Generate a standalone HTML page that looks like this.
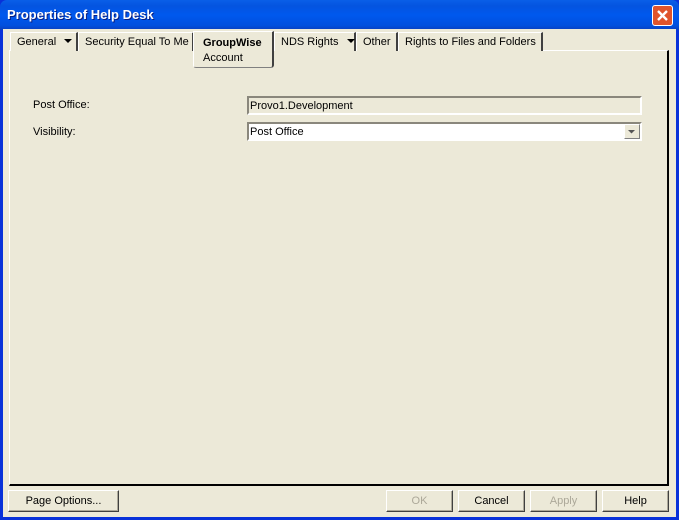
<!DOCTYPE html>
<html><head><style>
*{margin:0;padding:0;box-sizing:border-box}
body{width:679px;height:520px;overflow:hidden;background:#0831d9;font-family:"Liberation Sans",Tahoma,sans-serif;font-size:11px;color:#000;position:relative}
.abs{position:absolute}
#title{left:0;top:0;width:679px;height:30px;background:linear-gradient(#0a5fe8,#0454e0 20%,#0058ee 50%,#0150de 85%,#0a3fbd);border-radius:7px 7px 0 0}
#title span{position:absolute;left:7px;top:7px;color:#fff;font-weight:bold;font-size:13px;text-shadow:1px 1px #0a1e80}
#close{left:652px;top:5px;width:21px;height:21px;background:#e0542c;border:1px solid #fff;border-radius:3px}
#client{left:3px;top:29px;width:673px;height:488px;background:#ece9d8}
.tab{position:absolute;top:32px;height:19px;border:1px solid #fff;border-right:2px solid #404040;border-bottom:none;padding:3px 0 0 6px;background:#ece9d8;white-space:nowrap}
#panel{left:9px;top:50px;width:660px;height:436px;border-top:1px solid #fff;border-left:1px solid #fff;border-right:2px solid #000;border-bottom:2px solid #000}
.field{position:absolute;left:247px;width:395px;height:19px;border:2px solid;border-color:#8a877c #fff #fff #8a877c;padding:2px 0 0 1px}
.btn{position:absolute;top:490px;height:22px;border:1px solid;border-color:#fff #404040 #404040 #fff;box-shadow:inset -1px -1px #aca899;text-align:center;padding-top:4px;background:#ece9d8}
.dis{color:#aca899}
</style></head><body>
<div id="title" class="abs"><span>Properties of Help Desk</span></div>
<div id="close" class="abs"><svg width="19" height="19"><path d="M5 5L14 14M14 5L5 14" stroke="#fff" stroke-width="2.4"/></svg></div>
<div id="client" class="abs"></div>
<div id="panel" class="abs"></div>
<div class="tab" style="left:10px;width:68px">General <svg width="10" height="8" style="margin-left:4px"><path d="M1 2h8l-4 4z" fill="#000"/></svg></div>
<div class="tab" style="left:78px;width:116px">Security Equal To Me</div>
<div class="tab" style="left:274px;width:82px">NDS Rights <svg width="10" height="8" style="margin-left:4px"><path d="M1 2h8l-4 4z" fill="#000"/></svg></div>
<div class="tab" style="left:356px;width:42px">Other</div>
<div class="tab" style="left:398px;width:145px">Rights to Files and Folders</div>
<div class="abs" style="left:193px;top:31px;width:81px;height:37px;border:1px solid #fff;border-right:2px solid #404040;border-bottom:1px solid #808080;border-radius:0 0 3px 3px;background:#ece9d8;padding:4px 0 0 9px;line-height:15px"><b>GroupWise</b><br>Account</div>
<div class="abs" style="left:33px;top:99px">Post Office:</div>
<div class="abs" style="left:33px;top:126px">Visibility:</div>
<div class="field" style="top:96px;background:#ece9d8">Provo1.Development</div>
<div class="field" style="top:122px;background:#fff">Post Office
<div class="abs" style="right:0;top:0;width:16px;height:15px;background:#ece9d8;border:1px solid;border-color:#fff #808080 #808080 #fff"><svg width="14" height="13"><path d="M3 5h7l-3.5 3.5z" fill="#555"/></svg></div></div>
<div class="btn" style="left:8px;width:111px">Page Options...</div>
<div class="btn dis" style="left:386px;width:67px">OK</div>
<div class="btn" style="left:458px;width:67px">Cancel</div>
<div class="btn dis" style="left:530px;width:67px">Apply</div>
<div class="btn" style="left:602px;width:67px">Help</div>
</body></html>
